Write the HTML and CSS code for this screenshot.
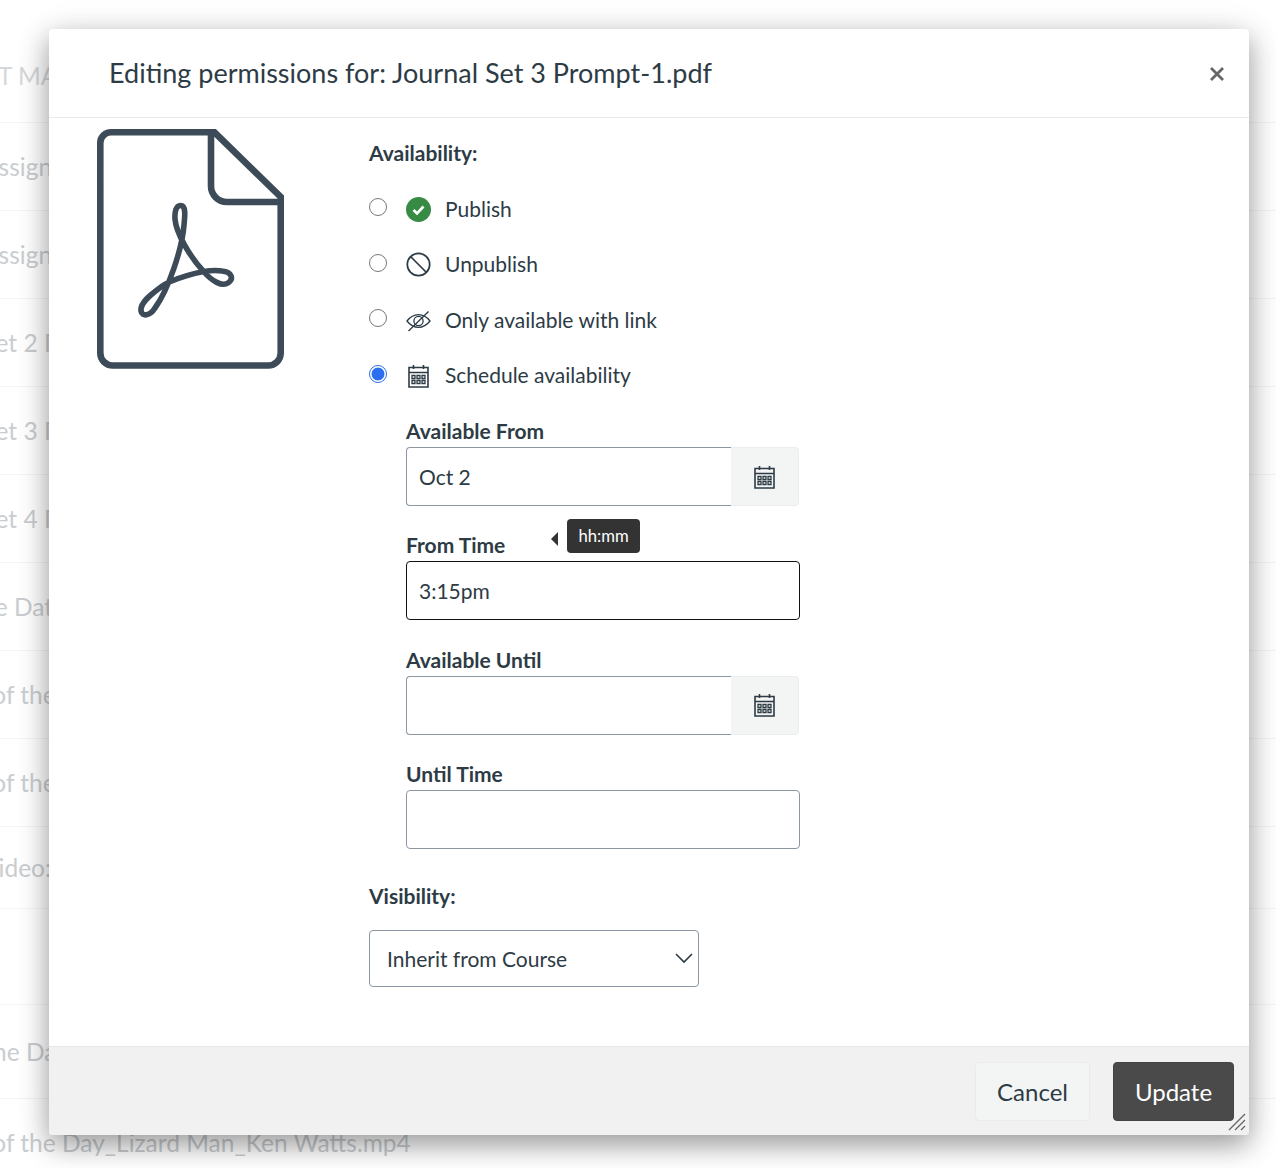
FILE: index.html
```html
<!DOCTYPE html>
<html lang="en">
<head>
<meta charset="utf-8">
<title>Editing permissions</title>
<link rel="stylesheet" href="styles.css">
</head>
<body>
<div class="page">
  <div class="rows">
    <div class="row row-head"><span class="off-head">PROMPT MATERIALS</span></div>
    <div class="row"><span class="off-a">Assignment</span></div>
    <div class="row"><span class="off-a">Assignment</span></div>
    <div class="row"><span class="off-set">Journal Set 2 Prompt</span></div>
    <div class="row"><span class="off-set">Journal Set 3 Prompt</span></div>
    <div class="row"><span class="off-set">Journal Set 4 Prompt</span></div>
    <div class="row"><span class="off-e">Word of the Date</span></div>
    <div class="row"><span class="off-of">Word of the Day</span></div>
    <div class="row"><span class="off-of">Word of the Day</span></div>
    <div class="row row-short"><span class="off-a">Video: Intro</span></div>
    <div class="row row-tall"></div>
    <div class="row row-mid"><span class="off-h">Word of the Day</span></div>
    <div class="row"><span class="off-of">Word of the Day_Lizard Man_Ken Watts.mp4</span></div>
  </div>

  <section class="modal">
    <header class="modal-head">
      <h1 class="modal-title">Editing permissions for: Journal Set 3 Prompt-1.pdf</h1>
      <button class="close" type="button" aria-label="Close">
        <svg width="16" height="16" viewBox="0 0 16 16"><path d="M2 2 14 14M14 2 2 14" fill="none" stroke="#666" stroke-width="2.8"/></svg>
      </button>
    </header>

    <div class="modal-body">
      <div class="file-col">
        <svg class="pdf" width="187" height="240" viewBox="0 0 187 240" fill="none" stroke="#3d4b58">
          <path stroke-width="6.6" d="M14 3.3H117.5L183.7 68V224A12.5 12.5 0 0 1 171.2 236.5H15.8A12.5 12.5 0 0 1 3.3 224V14A10.7 10.7 0 0 1 14 3.3Z"/>
          <path stroke-width="6.6" d="M114 4V57A16 16 0 0 0 130 73H183"/>
          <path stroke-width="5.6" transform="translate(-97 -129)" d="M180.5 205.500C176 205.500 174.500 212 175 219C176 233 190 257 204 272C212 281 222 287 228 283C234 279 232 272 222 271C203 268 168 281 161 287C150 295 140 303 141 311C142 317 150 316 155 308C168 290 182 250 184 225C185 215 186 205.500 180.500 205.500Z"/>
        </svg>
      </div>

      <form class="form-col">
        <div class="label">Availability:</div>
        <div class="options">
          <label class="option">
            <input class="radio" type="radio" name="avail">
            <svg width="26" height="26" viewBox="0 0 26 26"><circle cx="12.500" cy="12.500" r="12.500" fill="#388b45"/><path d="M7.500 13 11 16.500 17.500 9.500" fill="none" stroke="#fff" stroke-width="2.600"/></svg>
            <span>Publish</span>
          </label>
          <label class="option">
            <input class="radio" type="radio" name="avail">
            <svg width="26" height="26" viewBox="0 0 26 26" fill="none" stroke="#2d3b45" stroke-width="1.700"><circle cx="12.500" cy="12.500" r="11.200"/><path d="M4.500 4.500 20.500 20.500"/></svg>
            <span>Unpublish</span>
          </label>
          <label class="option">
            <input class="radio" type="radio" name="avail">
            <svg width="26" height="26" viewBox="0 0 26 26" fill="none" stroke="#2d3b45" stroke-width="1.300"><path d="M1 13C4.500 8.500 8.500 6.700 12.500 6.700S20.500 8.500 24 13C20.500 17.500 16.500 19.300 12.500 19.300S4.500 17.500 1 13Z"/><circle cx="12.500" cy="13" r="4.600"/><path d="M2.500 23 22.500 3.500"/></svg>
            <span>Only available with link</span>
          </label>
          <label class="option">
            <input class="radio" type="radio" name="avail" checked>
            <svg class="cal-opt" width="26" height="26" viewBox="0 0 26 26" fill="none" stroke="#2d3b45"><use href="#cal"/></svg>
            <span>Schedule availability</span>
          </label>
        </div>

        <div class="fields">
          <div class="field">
            <label class="label" for="from">Available From</label>
            <div class="date-group">
              <input class="text-input date-input" id="from" type="text" value="Oct 2">
              <button class="date-btn" type="button" aria-label="Pick date"><svg width="26" height="26" viewBox="0 0 26 26" fill="none" stroke="#2d3b45"><use href="#cal"/></svg></button>
            </div>
          </div>
          <div class="field">
            <div class="time-label-row">
              <label class="label" for="from-time">From Time</label>
              <div class="tip">hh:mm</div>
            </div>
            <input class="text-input focused" id="from-time" type="text" value="3:15pm">
          </div>
          <div class="field">
            <label class="label" for="until">Available Until</label>
            <div class="date-group">
              <input class="text-input date-input" id="until" type="text">
              <button class="date-btn" type="button" aria-label="Pick date"><svg width="26" height="26" viewBox="0 0 26 26" fill="none" stroke="#2d3b45"><use href="#cal"/></svg></button>
            </div>
          </div>
          <div class="field">
            <label class="label" for="until-time">Until Time</label>
            <input class="text-input" id="until-time" type="text">
          </div>
        </div>

        <div class="label visibility-label">Visibility:</div>
        <div class="select-wrap">
          <select class="select"><option>Inherit from Course</option></select>
          <svg class="chevron" width="20" height="12" viewBox="0 0 20 12"><path d="M2 2 10 10 18 2" fill="none" stroke="#2d3b45" stroke-width="1.600"/></svg>
        </div>
      </form>
    </div>

    <footer class="modal-foot">
      <button class="btn btn-cancel" type="button">Cancel</button>
      <button class="btn btn-update" type="button">Update</button>
      <svg class="grip" width="18" height="18" viewBox="0 0 18 18"><path d="M1 17 17 1M7 17 17 7M13 17 17 13" fill="none" stroke="#666" stroke-width="1.300"/></svg>
    </footer>
  </section>

  <svg class="sprite" width="0" height="0">
    <symbol id="cal" viewBox="0 0 26 26" overflow="visible">
      <path stroke-width="1.600" d="M3 4.500H22V24H3ZM3 9.500H22M7.500 2V6M17.500 2V6"/>
      <path stroke-width="1.300" d="M6 12.500h3v3h-3zM11 12.500h3v3h-3zM16 12.500h3v3h-3zM6 17.500h3v3h-3zM11 17.500h3v3h-3zM16 17.500h3v3h-3z"/>
    </symbol>
  </svg>
</div>
</body>
</html>
```

FILE: styles.css
```css
* { box-sizing: border-box; }
html, body { margin: 0; padding: 0; }
body { font-family: Lato, "Noto Sans", sans-serif; color: #2d3b45; background: #fff; }

.page { position: relative; width: 1276px; height: 1168px; overflow: hidden; background: #fff; }

.rows { padding-top: 35px; white-space: nowrap; }
.row { height: 88px; display: flex; align-items: center; border-bottom: 1px solid #f3f4f4; font-size: 24.5px; color: #c9cdd0; }
.row-head { color: #d5d8da; padding-bottom: 6px; }
.row-short { height: 82px; }
.row-tall { height: 96px; }
.row-mid { height: 94px; }
.off-head { margin-left: -89px; }
.off-a { margin-left: -18px; }
.off-set { margin-left: -102px; }
.off-of { margin-left: -74px; }
.off-e { margin-left: -122px; }
.off-h { margin-left: -110px; }

.modal {
  position: absolute; left: 49px; top: 29px; width: 1200px; height: 1106px;
  display: flex; flex-direction: column; background: #fff; border-radius: 4px;
  box-shadow: 0 10px 28px rgba(0,0,0,.38), 0 0 40px rgba(0,0,0,.06);
}

.modal-head { height: 89px; flex: none; display: flex; align-items: center; justify-content: space-between; padding: 0 24px 0 60px; border-bottom: 1px solid #e9ebec; }
.modal-title { margin: 0; font-size: 27px; font-weight: 400; line-height: 36px; color: #2d3b45; }
.close { border: 0; background: none; padding: 2px 0 0; display: flex; }

.modal-body { flex: 1; display: grid; grid-template-columns: 272px 1fr; padding-left: 48px; min-height: 0; }
.file-col { padding-top: 11px; }
.pdf { display: block; }
.form-col { padding-top: 19px; }

.label { display: block; font-size: 21px; font-weight: 700; line-height: 32px; color: #2d3b45; }

.options { margin-top: 13px; }
.option { height: 55.5px; display: grid; grid-template-columns: 37px 39px auto; align-items: center; justify-content: start; font-size: 21px; line-height: 32px; }
.option span { margin-bottom: 2px; }
.radio { appearance: none; width: 18px; height: 18px; margin: 0 0 5px; border: 1.5px solid #777; border-radius: 50%; background: #fff; }
.radio:checked { border: 1.5px solid #2b6ff0; background: radial-gradient(circle, #2b6ff0 0 6px, #fff 6.8px); }

.fields { margin-top: 11px; width: 394px; margin-left: 37px; display: flex; flex-direction: column; gap: 23.4px; }
.text-input { display: block; width: 394px; height: 59px; padding: 0 12px; border: 1px solid #8b97a2; border-radius: 4px; background: #fff; font: 400 21px Lato, sans-serif; color: #2d3b45; outline: none; }
.text-input.focused { border-color: #111; }
.date-group { display: flex; width: 393px; }
.date-input { width: 325px; border-radius: 4px 0 0 4px; border-right: 0; }
.date-btn { width: 68px; height: 59px; display: flex; align-items: center; justify-content: center; padding: 0; border: 1px solid #eceeee; border-left: 0; border-radius: 0 4px 4px 0; background: #f3f5f5; }
.time-label-row { position: relative; }
.tip { position: absolute; left: 161px; top: -10px; width: 73px; height: 34px; display: flex; align-items: center; justify-content: center; border-radius: 4px; background: #333; color: #fff; font-size: 16.7px; }
.tip::before { content: ""; position: absolute; left: -16px; top: 13px; border: 7px solid transparent; border-left-width: 0; border-right: 7px solid #333; }

.visibility-label { margin-top: 31px; }
.select-wrap { position: relative; width: 330px; margin-top: 18px; }
.select { appearance: none; display: block; width: 330px; height: 57px; padding: 0 17px; border: 1px solid #8b97a2; border-radius: 4px; background: #fff; font: 400 21px Lato, sans-serif; color: #2d3b45; }
.chevron { position: absolute; right: 5px; top: 22px; }

.modal-foot { position: relative; height: 89px; flex: none; display: flex; align-items: center; justify-content: flex-end; gap: 23px; padding: 0 15px 0 0; background: #f1f1f1; border-top: 1px solid #e6e8e8; border-radius: 0 0 4px 4px; }
.btn { height: 59px; border-radius: 4px; font: 400 24px Lato, sans-serif; padding: 0; }
.btn-cancel { width: 115px; background: #f3f5f5; border: 1px solid #eaecec; color: #2d3b45; }
.btn-update { width: 121px; background: #4a4a4a; border: 1px solid #444; color: #fff; }
.grip { position: absolute; right: 3px; bottom: 4px; }

.sprite { position: absolute; }
```
